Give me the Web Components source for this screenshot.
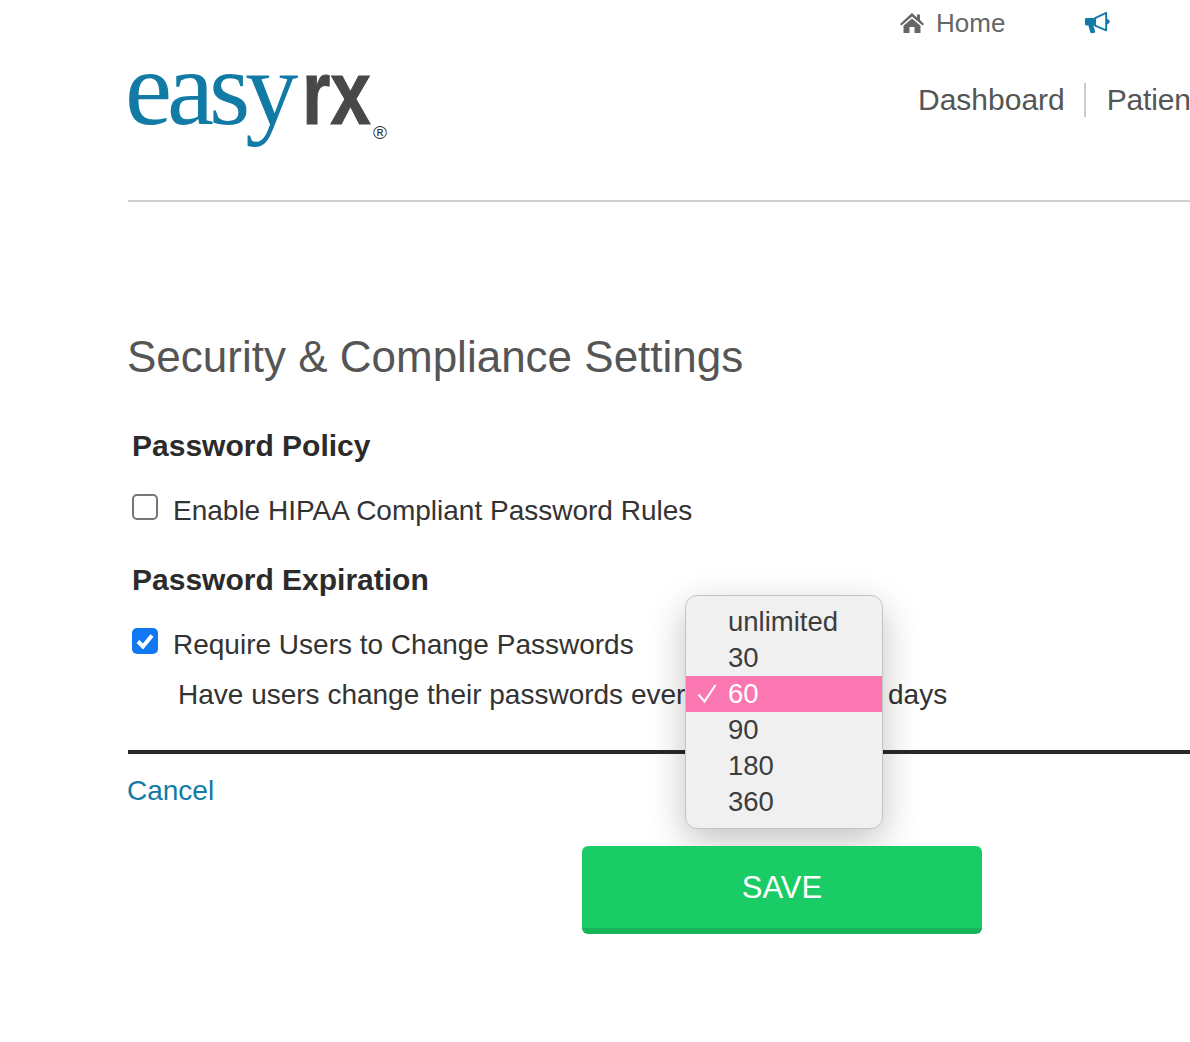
<!DOCTYPE html>
<html lang="en">
<head>
<meta charset="utf-8">
<title>Security &amp; Compliance Settings</title>
<style>
  html, body { margin: 0; padding: 0; background: #fff; }
  body { width: 1190px; height: 1042px; overflow: hidden; font-family: "Liberation Sans", Arial, sans-serif; color: #333; }
</style>
</head>
<body>
<rx-page>
  <rx-header slot="header"></rx-header>
  <h-title slot="title">Security &amp; Compliance Settings</h-title>
  <rx-section heading="Password Policy">
    <rx-check>Enable HIPAA Compliant Password Rules</rx-check>
  </rx-section>
  <rx-section heading="Password Expiration" class="second">
    <rx-check checked>Require Users to Change Passwords</rx-check>
    <rx-expiry></rx-expiry>
  </rx-section>
  <rx-footer slot="footer"></rx-footer>
</rx-page>

<script>
class RxPage extends HTMLElement {
  constructor() {
    super();
    this.attachShadow({ mode: 'open' });
    this.shadowRoot.innerHTML = `
      <style>
        :host { display: block; width: 1190px; height: 1042px; overflow: hidden; box-sizing: border-box; padding-left: 128px; }
        .body { display: flex; flex-direction: column; }
      </style>
      <slot name="header"></slot>
      <div class="body">
        <slot name="title"></slot>
        <slot></slot>
      </div>
      <slot name="footer"></slot>
    `;
  }
}

class RxHeader extends HTMLElement {
  constructor() {
    super();
    this.attachShadow({ mode: 'open' });
    this.shadowRoot.innerHTML = `
      <style>
        :host { display: block; height: 202px; box-sizing: border-box; border-bottom: 2px solid #cfcfcf; }
        .top { display: flex; height: 46px; align-items: center; padding-left: 772px; color: #666; font-size: 26px; }
        .top svg { display: block; }
        .home { width: 24px; height: 22px; margin-right: 12px; }
        .horn { width: 27px; height: 23px; margin-left: 79px; margin-top: -1px; }
        .main { display: flex; align-items: flex-start; white-space: nowrap; }
        .logo { width: 790px; height: 110px; flex: none; position: relative; display: flex; align-items: baseline; margin-top: -12px; line-height: 110px; }
        .easy { font-family: "Liberation Serif", serif; font-size: 106px; color: #117ba6; letter-spacing: -5px; margin-left: -3px; }
        .rx { font-family: "Liberation Sans", sans-serif; font-size: 90px; font-weight: 700; color: #484848; -webkit-text-stroke: 1px #484848; display: inline-block; width: 70px; margin-left: 9px; transform: scaleX(.81); transform-origin: left; }
        .reg { position: absolute; left: 245px; top: 88px; font-size: 19px; line-height: 22px; color: #333; }
        nav { display: flex; align-items: center; font-size: 30px; color: #555; height: 36px; margin-top: 36px; }
        nav span { display: block; line-height: 36px; }
        nav span:last-child { letter-spacing: -.2px; }
        nav .sep { width: 2px; height: 34px; background: #ccc; margin: 0 21px 0 19px; }
      </style>
      <div class="top">
        <svg class="home" viewBox="0 0 24 22" aria-hidden="true"><path fill="#666" d="M12 1 L17 5.4 V2.5 H20 V8 L24 12 L22.6 13.6 L12 4.4 L1.4 13.6 L0 12 Z M12 6.4 L20.5 13.8 V21 H14.5 V15 H9.5 V21 H3.5 V13.8 Z"/></svg>
        <span>Home</span>
        <svg class="horn" viewBox="0 0 28 24" preserveAspectRatio="none" aria-hidden="true">
          <path fill="#117ba6" d="M1 8.5 Q1 7.2 2.4 7.2 H11.5 V15.2 H9.6 L11.6 21.4 Q11.8 22.6 10.6 22.8 L8 23.2 Q6.8 23.3 6.5 22.2 L4.6 15.2 H2.4 Q1 15.2 1 13.8 Z"/>
          <path fill="none" stroke="#117ba6" stroke-width="2" stroke-linejoin="round" d="M11.5 7.4 L23 2 V20.2 L11.5 15.2 Z"/>
          <path fill="#117ba6" d="M23.5 8 Q26.6 8.6 26.6 11 Q26.6 13.4 23.5 14 Z"/>
        </svg>
      </div>
      <div class="main">
        <div class="logo"><span class="easy">easy</span><span class="rx">rx</span><span class="reg">®</span></div>
        <nav><span>Dashboard</span><i class="sep"></i><span>Patien</span></nav>
      </div>
    `;
  }
}

class HTitle extends HTMLElement {
  constructor() {
    super();
    this.attachShadow({ mode: 'open' });
    this.shadowRoot.innerHTML = `
      <style>
        :host { display: block; font-size: 44px; line-height: 52px; color: #555; margin: 129px 0 0 -1px; white-space: nowrap; }
      </style>
      <slot></slot>
    `;
  }
}

class RxSection extends HTMLElement {
  constructor() {
    super();
    this.attachShadow({ mode: 'open' });
    this.shadowRoot.innerHTML = `
      <style>
        :host { display: block; padding-left: 4px; margin-top: 45px; }
        :host(.second) { margin-top: 33px; }
        h3 { margin: 0 0 29px; font-size: 30px; line-height: 36px; font-weight: 700; color: #2b2b2b; }
      </style>
      <h3></h3>
      <slot></slot>
    `;
    this.shadowRoot.querySelector('h3').textContent = this.getAttribute('heading');
  }
}

class RxCheck extends HTMLElement {
  constructor() {
    super();
    this.attachShadow({ mode: 'open' });
    const checked = this.hasAttribute('checked');
    this.shadowRoot.innerHTML = `
      <style>
        :host { display: flex; align-items: center; gap: 15px; height: 36px; font-size: 28px; color: #333; white-space: nowrap; }
        .box { width: 26px; height: 26px; box-sizing: border-box; border-radius: 5px; flex: none; margin-top: -8px; }
        .off { border: 2px solid #767676; background: #fff; }
        .on { background: #0f78f2; }
        svg { display: block; width: 26px; height: 26px; }
      </style>
      ${checked
        ? '<span class="box on"><svg viewBox="0 0 26 26"><path d="M6 13.5 L11 18.5 L20 7.5" fill="none" stroke="#fff" stroke-width="4"/></svg></span>'
        : '<span class="box off"></span>'}
      <span><slot></slot></span>
    `;
  }
}

class RxExpiry extends HTMLElement {
  constructor() {
    super();
    this.attachShadow({ mode: 'open' });
    this.shadowRoot.innerHTML = `
      <style>
        :host { display: flex; position: relative; height: 36px; margin-top: 14px; margin-left: 46px; font-size: 28px; line-height: 36px; color: #333; white-space: nowrap; }
        .days { position: absolute; left: 710px; top: 0; }
        rx-menu { position: absolute; left: 507px; top: -82px; }
      </style>
      <span>Have users change their passwords every</span>
      <span class="days">days</span>
      <rx-menu selected="60"></rx-menu>
    `;
  }
}

class RxMenu extends HTMLElement {
  constructor() {
    super();
    this.attachShadow({ mode: 'open' });
    const selected = this.getAttribute('selected');
    const rows = ['unlimited', '30', '60', '90', '180', '360'].map((v) => `
      <div class="row ${v === selected ? 'sel' : ''}">
        ${v === selected ? '<svg viewBox="0 0 22 22"><path d="M1.5 11.5 L7.5 18.5 L18.5 2" fill="none" stroke="#fff" stroke-width="2"/></svg>' : ''}
        <span>${v}</span>
      </div>`).join('');
    this.shadowRoot.innerHTML = `
      <style>
        :host { display: block; z-index: 5; width: 198px; height: 234px; box-sizing: border-box; padding: 8px 0 10px; background: #f0f0f0; border: 1px solid #c4c4c4; border-radius: 12px; box-shadow: 0 12px 36px rgba(0,0,0,.24); font-size: 27.5px; color: #3c3c3c; overflow: hidden; }
        .row { position: relative; height: 36px; line-height: 36px; padding-left: 42px; }
        .sel { background: #fb77b1; color: #fff; }
        svg { position: absolute; left: 11px; top: 7px; width: 22px; height: 22px; }
      </style>
      ${rows}
    `;
  }
}

class RxFooter extends HTMLElement {
  constructor() {
    super();
    this.attachShadow({ mode: 'open' });
    this.shadowRoot.innerHTML = `
      <style>
        :host { display: block; margin-top: 37px; border-top: 4px solid #2a2a2a; }
        a { display: block; margin: 19px 0 0 -1px; font-size: 28px; line-height: 36px; color: #117ba6; text-decoration: none; }
        button { position: relative; z-index: 6; display: block; width: 400px; height: 88px; margin: 37px 0 0 454px; box-sizing: border-box; padding: 2px 0 0; border: 0; border-bottom: 6px solid #17b45a; border-radius: 6px; background: #1acc65; color: #fff; font: 31px "Liberation Sans", Arial, sans-serif; }
      </style>
      <a href="#">Cancel</a>
      <button type="button">SAVE</button>
    `;
  }
}

customElements.define('rx-page', RxPage);
customElements.define('rx-header', RxHeader);
customElements.define('h-title', HTitle);
customElements.define('rx-section', RxSection);
customElements.define('rx-check', RxCheck);
customElements.define('rx-menu', RxMenu);
customElements.define('rx-expiry', RxExpiry);
customElements.define('rx-footer', RxFooter);
</script>
</body>
</html>
